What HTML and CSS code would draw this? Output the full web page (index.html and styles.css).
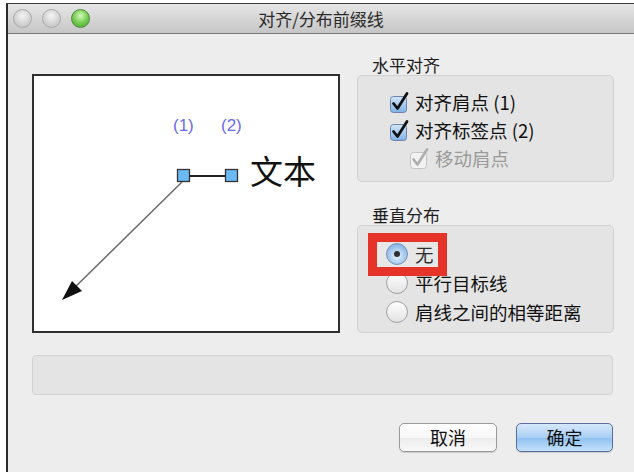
FILE: index.html
```html
<!DOCTYPE html>
<html lang="zh-CN">
<head>
<meta charset="utf-8">
<title>对齐/分布前缀线</title>
<link rel="stylesheet" href="styles.css">
</head>
<body>
<div class="window">
  <div class="titlebar">
    <div class="lights">
      <span class="light"></span>
      <span class="light"></span>
      <span class="light green"></span>
    </div>
    <div class="title">对齐/分布前缀线</div>
    <div></div>
  </div>
  <div class="content">
    <div class="top">
      <div class="preview">
        <svg width="304" height="255" viewBox="0 0 304 255">
          <text x="139" y="55" class="num">(1)</text>
          <text x="187" y="55" class="num">(2)</text>
          <line x1="148" y1="106" x2="32" y2="220" stroke="#6a6a6a" stroke-width="1.5"/>
          <polygon points="28,224 38,205 48,215" fill="#111"/>
          <line x1="156" y1="100" x2="191" y2="100" stroke="#222" stroke-width="2"/>
          <rect x="143.5" y="93.5" width="12" height="12" fill="#6cbaf5" stroke="#333" stroke-width="1.3"/>
          <rect x="191.5" y="93.5" width="12" height="12" fill="#6cbaf5" stroke="#333" stroke-width="1.3"/>
          <text x="216" y="108" class="big">文本</text>
        </svg>
      </div>
      <div class="options">
        <div class="group">
          <div class="group-label">水平对齐</div>
          <div class="group-box box1">
            <div class="row">
              <svg class="cb" width="22" height="22" viewBox="0 0 22 22">
                <defs><linearGradient id="cbg" x1="0" y1="0" x2="0" y2="1"><stop offset="0" stop-color="#d4e6f8"/><stop offset="1" stop-color="#7fb2e6"/></linearGradient></defs>
                <rect x="1.5" y="5.5" width="16" height="16" rx="3" fill="url(#cbg)" stroke="#6a84ad"/>
                <path d="M4.5 12.5 L8.5 17.5 L18 2.5" fill="none" stroke="#111" stroke-width="2.8" stroke-linecap="round" stroke-linejoin="round"/>
              </svg>
              <span>对齐肩点 (1)</span>
            </div>
            <div class="row">
              <svg class="cb" width="22" height="22" viewBox="0 0 22 22">
                <rect x="1.5" y="5.5" width="16" height="16" rx="3" fill="url(#cbg)" stroke="#6a84ad"/>
                <path d="M4.5 12.5 L8.5 17.5 L18 2.5" fill="none" stroke="#111" stroke-width="2.8" stroke-linecap="round" stroke-linejoin="round"/>
              </svg>
              <span>对齐标签点 (2)</span>
            </div>
            <div class="row sub disabled">
              <svg class="cb" width="22" height="22" viewBox="0 0 22 22">
                <rect x="1.5" y="5.5" width="16" height="16" rx="3" fill="#f2f2f2" stroke="#c4c4c4"/>
                <path d="M4.5 12.5 L8.5 17.5 L18 2.5" fill="none" stroke="#b0b0b0" stroke-width="2.8" stroke-linecap="round" stroke-linejoin="round"/>
              </svg>
              <span>移动肩点</span>
            </div>
          </div>
        </div>
        <div class="group">
          <div class="group-label">垂直分布</div>
          <div class="group-box box2">
            <div class="row radio-row">
              <svg class="rb" width="24" height="24" viewBox="0 0 24 24">
                <defs>
                  <radialGradient id="rsel" cx="0.5" cy="0.6" r="0.6"><stop offset="0" stop-color="#e6f2fd"/><stop offset="1" stop-color="#6ea7e2"/></radialGradient>
                  <linearGradient id="roff" x1="0" y1="0" x2="0" y2="1"><stop offset="0" stop-color="#ffffff"/><stop offset="1" stop-color="#e2e2e2"/></linearGradient>
                </defs>
                <circle cx="12" cy="12" r="10.5" fill="url(#rsel)" stroke="#6a84ad"/>
                <circle cx="12" cy="12" r="3" fill="#111"/>
              </svg>
              <span>无</span>
            </div>
            <div class="row radio-row">
              <svg class="rb" width="24" height="24" viewBox="0 0 24 24">
                <circle cx="12" cy="12" r="10.5" fill="url(#roff)" stroke="#a0a0a0"/>
              </svg>
              <span>平行目标线</span>
            </div>
            <div class="row radio-row">
              <svg class="rb" width="24" height="24" viewBox="0 0 24 24">
                <circle cx="12" cy="12" r="10.5" fill="url(#roff)" stroke="#a0a0a0"/>
              </svg>
              <span>肩线之间的相等距离</span>
            </div>
            <div class="highlight"></div>
          </div>
        </div>
      </div>
    </div>
    <div class="status"></div>
    <div class="buttons">
      <button class="btn">取消</button>
      <button class="btn primary">确定</button>
    </div>
  </div>
</div>
</body>
</html>
```

FILE: styles.css
```css
html, body {
  margin: 0;
  padding: 0;
  background: #ffffff;
  font-family: "Noto Sans CJK SC", "Liberation Sans", sans-serif;
}

.window {
  margin: 3px 0 0 6px;
  height: 468px;
  border-left: 2px solid #2b2b2b;
  border-top: 1px solid #3a3a3a;
  background: #ededed;
  overflow: hidden;
}

.titlebar {
  height: 29px;
  border-bottom: 1px solid #7c7c7c;
  background: linear-gradient(#e6e6e6, #c6c6c6);
  display: grid;
  grid-template-columns: 1fr auto 1fr;
  align-items: center;
}

.lights {
  display: flex;
  align-items: center;
  gap: 10px;
  padding-left: 5px;
}

.light {
  width: 17px;
  height: 17px;
  border-radius: 50%;
  border: 1px solid #a9a9a9;
  background: radial-gradient(circle at 50% 35%, #f4f4f4 0%, #d4d4d4 55%, #bcbcbc 100%);
}

.light.green {
  border-color: #4e8a3c;
  background: radial-gradient(circle at 50% 35%, #d8f7c2 0%, #7fd35a 45%, #3f9a2a 100%);
}

.title {
  font-size: 17px;
  color: #2a2a2a;
  line-height: 20px;
}

.content {
  padding: 21px 20px 0 24px;
}

.top {
  display: flex;
  gap: 17px;
  align-items: flex-start;
}

.preview {
  margin-top: 19px;
  width: 304px;
  height: 255px;
  border: 2px solid #2f2f2f;
  background: #ffffff;
}

.preview svg {
  display: block;
}

.num {
  font-family: "Liberation Sans", sans-serif;
  font-size: 17px;
  fill: #6a6af2;
}

.big {
  font-family: "Noto Sans CJK SC", sans-serif;
  font-size: 33px;
  fill: #111;
}

.options {
  width: 257px;
  display: flex;
  flex-direction: column;
  gap: 23px;
}

.group-label {
  font-size: 17px;
  line-height: 20px;
  padding-left: 15px;
  color: #1e1e1e;
}

.group-box {
  position: relative;
  background: #e4e4e4;
  border: 1px solid #d0d0d0;
  border-radius: 5px;
}

.box1 {
  padding: 12px 0 0 31px;
  height: 93px;
}

.box2 {
  padding: 13px 0 0 27px;
  height: 93px;
}

.row {
  display: flex;
  align-items: center;
  height: 28px;
  font-size: 18.5px;
  color: #111;
  gap: 4px;
}

.row.sub {
  padding-left: 20px;
}

.row.disabled {
  color: #9a9a9a;
}

.radio-row {
  height: 29px;
  gap: 6px;
}

.cb, .rb {
  display: block;
  flex: none;
}

.highlight {
  position: absolute;
  left: 10px;
  top: 7px;
  width: 61px;
  height: 25px;
  border: 9px solid #e5332a;
  background: rgba(255, 255, 255, 0.12);
}

.status {
  margin-top: 22px;
  height: 38px;
  background: #e4e4e4;
  border: 1px solid #d2d2d2;
  border-radius: 4px;
  width: 579px;
}

.buttons {
  margin-top: 28px;
  display: flex;
  justify-content: flex-end;
  gap: 19px;
  width: 581px;
}

.btn {
  width: 98px;
  height: 29px;
  border: 1px solid #9a9a9a;
  border-radius: 5px;
  background: linear-gradient(#ffffff, #f7f7f7 50%, #ececec 51%, #f8f8f8);
  font-family: "Noto Sans CJK SC", sans-serif;
  font-size: 18px;
  color: #111;
  padding: 0;
  line-height: 27px;
  box-shadow: 0 1px 1px rgba(0,0,0,0.15);
}

.btn.primary {
  width: 97px;
  border-color: #5b6ea0;
  background: linear-gradient(#d6e8fb, #a9cff4 50%, #8dc0f0 51%, #c4e2fb);
}
```
